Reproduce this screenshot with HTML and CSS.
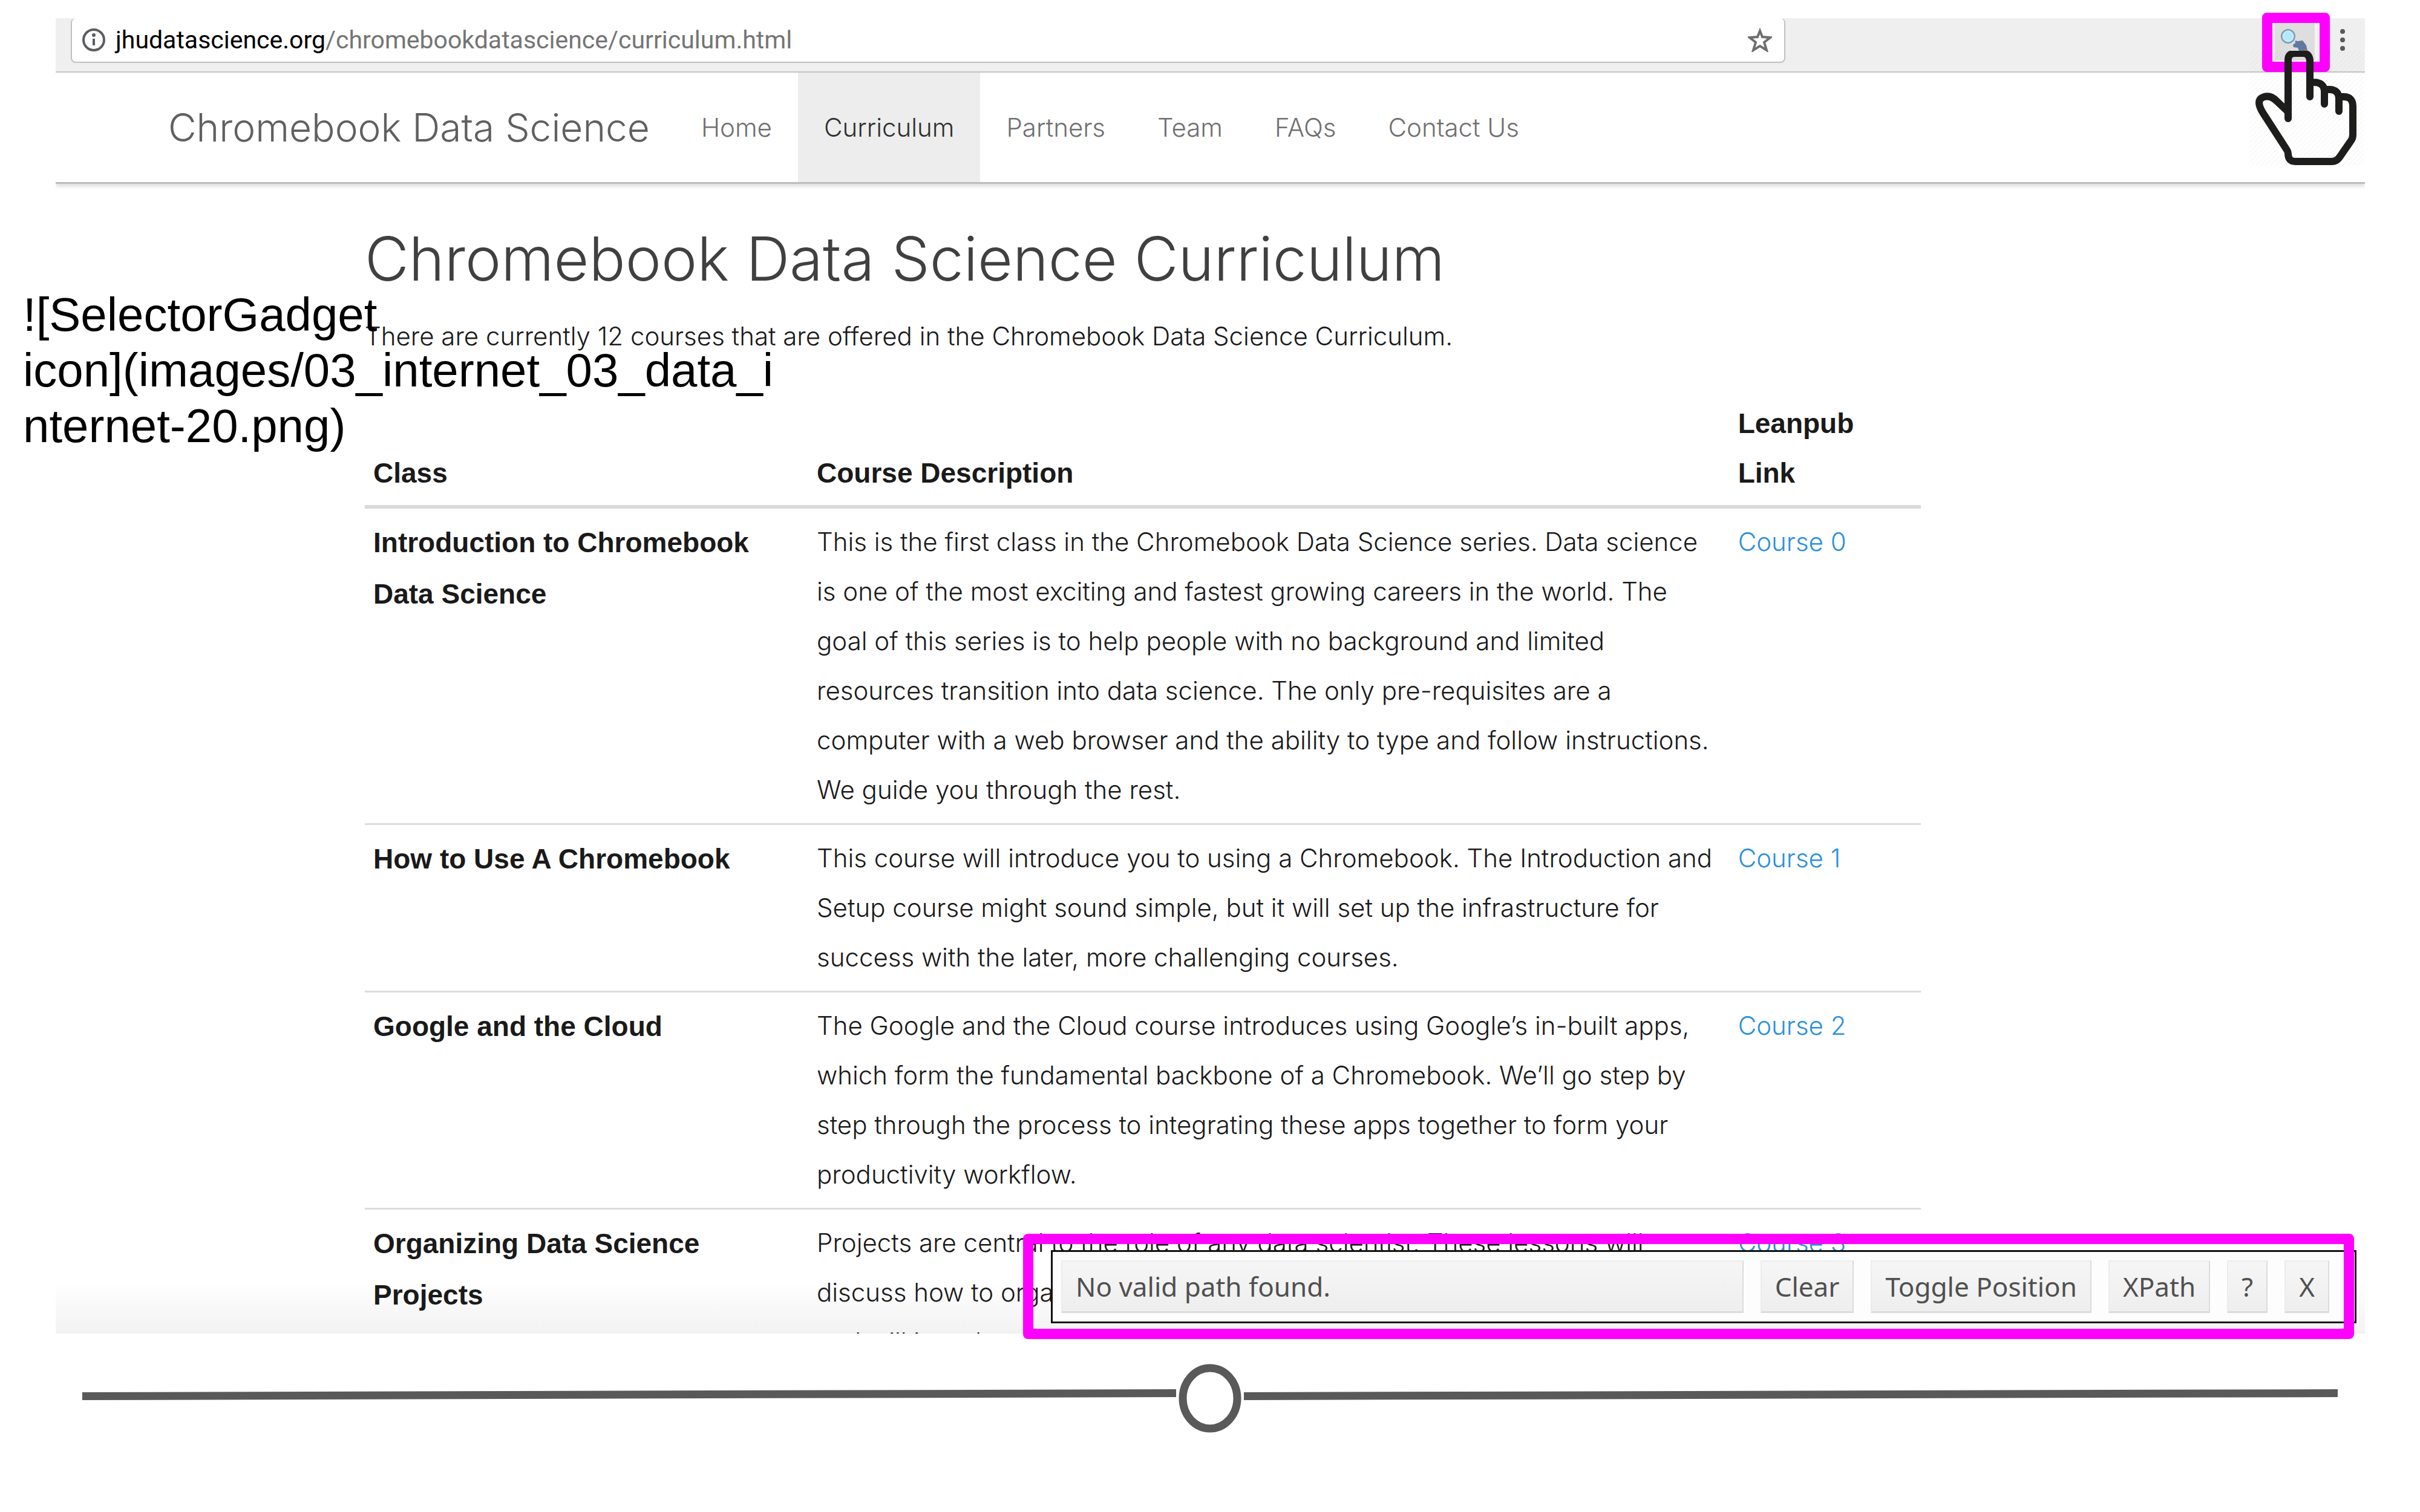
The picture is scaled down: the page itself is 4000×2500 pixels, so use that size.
FILE: index.html
```html
<!DOCTYPE html>
<html lang="en">
<head>
<meta charset="utf-8">
<title>Chromebook Data Science Curriculum</title>
<link rel="stylesheet" href="styles.css">
</head>
<body>
<main class="slide">
  <section class="browser">
    <header class="toolbar">
      <div class="address">
        <svg class="icon" viewBox="0 0 40 40" aria-hidden="true"><circle cx="20" cy="20" r="17" fill="none" stroke="#5a5d61" stroke-width="4"/><path d="M20 18v11" stroke="#5a5d61" stroke-width="4"/><circle cx="20" cy="12" r="3" fill="#5a5d61"/></svg>
        <div class="url">jhudatascience.org<span class="url-path">/chromebookdatascience/curriculum.html</span></div>
        <svg class="icon" viewBox="0 0 40 40" aria-hidden="true"><path d="M20 5l4 10 13 1-10 8 4 13-11-7-11 7 4-13-10-8 13-1z" fill="none" stroke="#6e6e70" stroke-width="4"/></svg>
      </div>
      <svg class="menu" viewBox="0 0 10 40" aria-hidden="true"><g fill="#5a5a5c"><circle cx="5" cy="6" r="4"/><circle cx="5" cy="20" r="4"/><circle cx="5" cy="34" r="4"/></g></svg>
    </header>
    <nav class="nav">
      <a class="brand" href="#">Chromebook Data Science</a>
      <a class="tab" href="#">Home</a>
      <a class="tab current" href="#">Curriculum</a>
      <a class="tab" href="#">Partners</a>
      <a class="tab" href="#">Team</a>
      <a class="tab" href="#">FAQs</a>
      <a class="tab" href="#">Contact Us</a>
    </nav>
    <article class="content">
      <h1>Chromebook Data Science Curriculum</h1>
      <p class="lead">There are currently 12 courses that are offered in the Chromebook Data Science Curriculum.</p>
      <table class="courses">
        <thead>
          <tr><th class="col-class" scope="col">Class</th><th class="col-about" scope="col">Course Description</th><th class="col-link" scope="col">Leanpub Link</th></tr>
        </thead>
        <tbody>
          <tr>
            <th scope="row">Introduction to Chromebook Data Science</th>
            <td>This is the first class in the Chromebook Data Science series. Data science is one of the most exciting and fastest growing careers in the world. The<br>goal of this series is to help people with no background and limited<br>resources transition into data science. The only pre-requisites are a<br>computer with a web browser and the ability to type and follow instructions. We guide you through the rest.</td>
            <td><a href="#">Course 0</a></td>
          </tr>
          <tr>
            <th scope="row">How to Use A Chromebook</th>
            <td>This course will introduce you to using a Chromebook. The Introduction and Setup course might sound simple, but it will set up the infrastructure for success with the later, more challenging courses.</td>
            <td><a href="#">Course 1</a></td>
          </tr>
          <tr>
            <th scope="row">Google and the Cloud</th>
            <td>The Google and the Cloud course introduces using Google’s in-built apps, which form the fundamental backbone of a Chromebook. We’ll go step by step through the process to integrating these apps together to form your productivity workflow.</td>
            <td><a href="#">Course 2</a></td>
          </tr>
          <tr>
            <th scope="row">Organizing Data Science Projects</th>
            <td>Projects are central to the role of any data scientist. These lessons will<br>discuss how to organize<br>and will introduce</td>
            <td><a href="#">Course 3</a></td>
          </tr>
        </tbody>
      </table>
    </article>
  </section>

  <form class="gadget">
    <input class="path" type="text" aria-label="Selector path" value="No valid path found." readonly>
    <button type="button">Clear</button>
    <button type="button">Toggle Position</button>
    <button type="button">XPath</button>
    <button type="button">?</button>
    <button type="button">X</button>
  </form>
  <div class="mark mark-gadget"></div>

  <div class="mark mark-extension">
    <svg viewBox="0 0 78 64" aria-hidden="true"><path d="M0 0h78v64H0z" fill="#f4f4f4"/><path d="M4 0h66v62H4z" fill="#dedede"/><path d="M38 30l10 7" stroke="#66718a" stroke-width="3"/><path d="M34 36l8-6 8-1 6 8 2 9H44l-2-5-7-1z" fill="#61799f"/><path d="M54 42l5 6h-7z" fill="#b0705a"/><circle cx="26" cy="22" r="11" fill="#9edcf4" stroke="#7d97ac" stroke-width="2"/><circle cx="26" cy="22" r="8" fill="#b4e8fa" stroke="#e2f6fd" stroke-width="1"/></svg>
  </div>
  <svg class="hand" viewBox="0 0 189 189" aria-hidden="true">
    <defs><pattern id="hatch" width="8" height="8" patternUnits="userSpaceOnUse"><path d="M-2 10L10-2M-2 2L2-2M6 10l4-4" stroke="#000" stroke-opacity=".05" stroke-width="1"/></pattern></defs>
    <path d="M0 0h189v189H0z" fill="url(#hatch)"/>
    <path d="M64 112V15Q64 4 76 4H88Q100 4 100 18V76M100 52h6Q124 52 124 68V88M124 64h8Q148 64 148 80V100M148 76h8Q171 76 171 92V139Q171 145 167 150L149 176Q144 183 136 183H76Q64 183 64 170Q64 167 62 164L22 102Q10 82 22 77Q34 72 45 83L63 100" fill="none" stroke="#1d1d1b" stroke-width="12" stroke-linecap="round" stroke-linejoin="round"/>
  </svg>

  <p class="alt-text">![SelectorGadget<br>icon](images/03_internet_03_data_i<br>nternet-20.png)</p>

  <svg class="divider" viewBox="0 0 3728 116" aria-hidden="true">
    <path d="M0 48L1808 43v13L0 61zM1920 48L3728 43v13L1920 61z" fill="#595959"/>
    <ellipse cx="1864" cy="58" rx="45" ry="50" fill="#fff" stroke="#595959" stroke-width="13"/>
  </svg>
</main>
</body>
</html>
```
FILE: styles.css
```css
* { box-sizing: border-box; }

body {
  margin: 0;
  background: #fff;
  color: #1a1a1a;
  font-family: Inter, "Liberation Sans", sans-serif;
  font-weight: 300;
}

a { text-decoration: none; }

.slide {
  position: relative;
  padding: 30px 91px 0 92px;
}

/* Browser window, cut off at its lower edge */
.browser {
  aspect-ratio: 3817 / 2175;
  overflow: hidden;
  background: linear-gradient(#fff, #fff 96%, #f2f2f2);
}

.toolbar {
  display: flex;
  justify-content: space-between;
  height: 90px;
  padding: 0 32px 14px 25px;
  border-bottom: 2px solid #c4c4c4;
  background: #efefef;
}

.address {
  display: flex;
  align-items: center;
  gap: 16px;
  flex: 0 0 2834px;
  padding: 0 20px 0 16px;
  border: solid #c0c0c0;
  border-width: 0 2px 2px;
  border-radius: 8px;
  background: #fff;
}

.icon { width: 40px; height: 40px; }

.url {
  flex: 1;
  color: #000;
  font: 41px/56px Roboto, sans-serif;
}

.url-path { color: #757575; }

.menu { width: 10px; height: 40px; margin-top: 16px; }

.nav {
  display: flex;
  align-items: center;
  height: 184px;
  padding-left: 186px;
  border-bottom: 3px solid #bdbdbd;
  box-shadow: 0 4px 6px #0002;
  background: #fff;
}

.brand { margin-right: 42px; color: #606060; font-size: 64px; }

.tab { padding: 0 43px; color: #707070; font-size: 42px; line-height: 181px; }

.current { background: #ededed; color: #303030; }

.content { padding: 64px 734px 0 511px; }

h1 {
  margin: 0;
  color: #404040;
  font-size: 100px;
  font-weight: 300;
  line-height: 120px;
}

.lead { margin: 26px 0 47px; font-size: 42px; line-height: 84px; }

.courses {
  width: 100%;
  border-collapse: collapse;
  table-layout: fixed;
  font-size: 42px;
  line-height: 82px;
}

.courses th, .courses td {
  padding: 14px;
  text-align: left;
  vertical-align: top;
  border-top: 3px solid #dcdcdc;
}

.courses th { font: 700 46px/82px "Liberation Sans", sans-serif; }

.courses tbody th { line-height: 85px; }

.courses thead th {
  padding-bottom: 12px;
  vertical-align: bottom;
  border-top: 0;
  border-bottom: 6px solid #dadada;
}

.courses a { color: #2a90e0; }

.col-class { width: 28.5%; }
.col-about { width: 59.2%; }

/* Selector toolbar floating over the page */
.gadget {
  position: absolute;
  top: 2067px;
  left: 1737px;
  right: 105px;
  display: flex;
  gap: 28px;
  padding: 14px 42px 14px 14px;
  border: 3px solid #111;
  background: #fdfdfd;
}

.gadget input, .gadget button {
  height: 87px;
  padding: 0 22px;
  border: solid #dcdcdc;
  border-width: 2px 2px 3px;
  border-top-color: #ececec;
  border-left-color: #ececec;
  background: linear-gradient(#f6f6f6, #eeeeee);
  color: #505050;
  font: 44px/56px "Noto Sans", sans-serif;
}

.gadget .path { flex: 1; min-width: 0; }

.mark { position: absolute; border: 17px solid #f0f; border-radius: 8px; }

.mark-gadget { top: 2040px; left: 1691px; right: 109px; height: 174px; }

.mark-extension { top: 21px; right: 149px; width: 112px; height: 98px; }

.mark-extension svg { display: block; width: 78px; height: 64px; }

.hand { position: absolute; top: 84px; right: 93px; width: 189px; height: 189px; }

.alt-text {
  position: absolute;
  top: 474px;
  left: 38px;
  margin: 0;
  color: #000;
  font: 78px/92px "Liberation Sans", sans-serif;
}

.divider { display: block; width: calc(100% - 89px); margin: 49px 0 0 44px; }
```
